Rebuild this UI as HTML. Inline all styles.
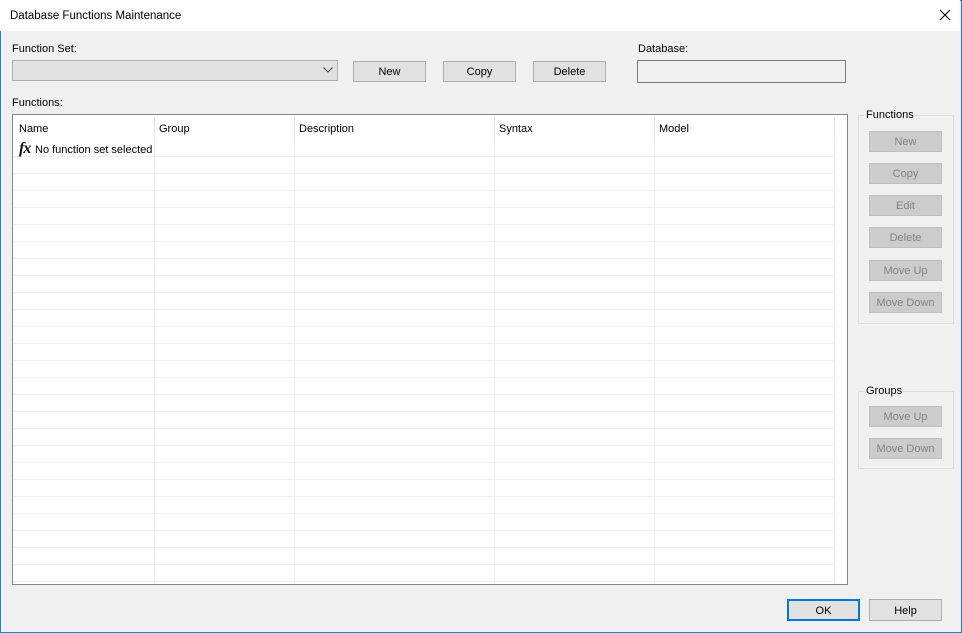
<!DOCTYPE html>
<html><head><meta charset="utf-8"><style>
*{box-sizing:border-box;margin:0;padding:0}
body{width:962px;height:633px;overflow:hidden;background:#f0f0f0;font-family:"Liberation Sans",sans-serif;font-size:11px;color:#000;position:relative}
.win{position:absolute;left:0;top:0;width:962px;height:633px;border:1px solid #1883d7}
.title{position:absolute;left:0;top:0;width:960px;height:31px;background:#fff}
.a{position:absolute}
.btn{position:absolute;height:21px;background:#e1e1e1;border:1px solid #adadad;text-align:center;line-height:21px;font-size:11px}
.dis{background:#cccccc;border-color:#bfbfbf;color:#838383}
.gb{position:absolute;border:1px solid #dcdcdc}
.gb span{position:absolute;top:-7px;left:6px;background:#f0f0f0;padding:0 1px}
.col{position:absolute;top:0;width:1px;height:100%;background:#f0f0f0}
</style></head><body>
<div class="win"></div>
<div class="title"></div>
<div class="a" style="left:10px;top:10px;font-size:11.5px">Database Functions Maintenance</div>
<svg class="a" style="left:939px;top:9px" width="12" height="12"><path d="M1 1L11 11M11 1L1 11" stroke="#000" stroke-width="1.2"/></svg>

<div class="a" style="left:12px;top:43px">Function Set:</div>
<div class="a" style="left:12px;top:60px;width:326px;height:21px;background:#e1e1e1;border:1px solid #adadad"></div>
<svg class="a" style="left:323px;top:67px" width="10" height="6"><path d="M0.5 0.5L5 5L9.5 0.5" stroke="#444" fill="none"/></svg>
<div class="btn" style="left:353px;top:61px;width:73px">New</div>
<div class="btn" style="left:443px;top:61px;width:73px">Copy</div>
<div class="btn" style="left:533px;top:61px;width:73px">Delete</div>
<div class="a" style="left:638px;top:43px">Database:</div>
<div class="a" style="left:637px;top:60px;width:209px;height:23px;border:1px solid #7a7a7a;background:#f0f0f0"></div>

<div class="a" style="left:12px;top:97px">Functions:</div>
<div class="a" style="left:12px;top:114px;width:836px;height:471px;border:1px solid #828790;background:#fff;overflow:hidden">
  <div class="a" style="left:0;top:41px;width:822px;height:430px;background:repeating-linear-gradient(to bottom,#f0f0f0 0,#f0f0f0 1px,transparent 1px,transparent 17px)"></div>
  <div class="col" style="left:141px"></div>
  <div class="col" style="left:281px"></div>
  <div class="col" style="left:481px"></div>
  <div class="col" style="left:641px"></div>
  <div class="col" style="left:821px"></div>
  <div class="a" style="left:0;top:0;width:834px;height:24px;background:#fff"></div>
  <div class="a" style="left:141px;top:2px;width:1px;height:22px;background:#e5e5e5"></div>
  <div class="a" style="left:281px;top:2px;width:1px;height:22px;background:#e5e5e5"></div>
  <div class="a" style="left:481px;top:2px;width:1px;height:22px;background:#e5e5e5"></div>
  <div class="a" style="left:641px;top:2px;width:1px;height:22px;background:#e5e5e5"></div>
  <div class="a" style="left:821px;top:2px;width:1px;height:22px;background:#e5e5e5"></div>
  <div class="a" style="left:6px;top:8px">Name</div>
  <div class="a" style="left:146px;top:8px">Group</div>
  <div class="a" style="left:286px;top:8px">Description</div>
  <div class="a" style="left:486px;top:8px">Syntax</div>
  <div class="a" style="left:646px;top:8px">Model</div>
  <div class="a" style="left:6px;top:25px;font-family:'Liberation Serif',serif;font-style:italic;font-weight:bold;font-size:16px;color:#111;letter-spacing:-1px">fx</div>
  <div class="a" style="left:22px;top:29px">No function set selected</div>
</div>

<div class="gb" style="left:858px;top:115px;width:96px;height:209px"><span>Functions</span></div>
<div class="btn dis" style="left:869px;top:131px;width:73px">New</div>
<div class="btn dis" style="left:869px;top:163px;width:73px">Copy</div>
<div class="btn dis" style="left:869px;top:195px;width:73px">Edit</div>
<div class="btn dis" style="left:869px;top:227px;width:73px">Delete</div>
<div class="btn dis" style="left:869px;top:260px;width:73px">Move Up</div>
<div class="btn dis" style="left:869px;top:292px;width:73px">Move Down</div>

<div class="gb" style="left:858px;top:391px;width:96px;height:78px"><span>Groups</span></div>
<div class="btn dis" style="left:869px;top:406px;width:73px">Move Up</div>
<div class="btn dis" style="left:869px;top:438px;width:73px">Move Down</div>

<div class="btn" style="left:787px;top:599px;width:73px;height:22px;border:2px solid #0078d7;line-height:20px">OK</div>
<div class="btn" style="left:869px;top:599px;width:73px;height:22px;line-height:22px">Help</div>
</body></html>
